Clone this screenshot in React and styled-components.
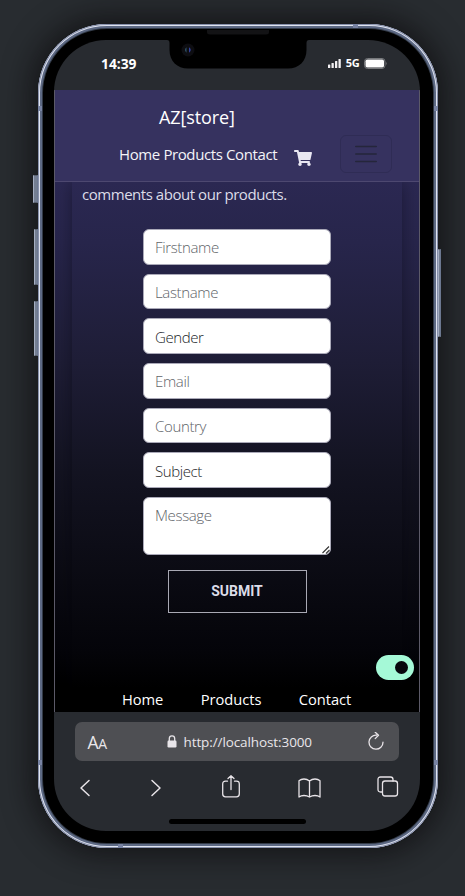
import React from 'react';
import styled, { createGlobalStyle } from 'styled-components';

const Global = createGlobalStyle`
  * { box-sizing: border-box; }
  body {
    margin: 0;
    background: #282c30;
    font-family: "Open Sans", "Noto Sans", sans-serif;
    overflow: hidden;
  }
  input, button, textarea { font-family: inherit; margin: 0; }
`;

const Stage = styled.main`
  width: 465px;
  height: 896px;
  padding: 24px 27px 48px 38px;
  overflow: hidden;
`;

const Phone = styled.div`
  position: relative;
  width: 400px;
  height: 824px;
  padding: 16px 18px 17px 16px;
  border-radius: 69px;
  background: #000;
  box-shadow:
    inset 0 0 0 1px #8790ab,
    inset 0 0 0 2px #e0e4f0,
    inset 0 0 0 4px #5d6984,
    inset 0 0 0 5px #323a47,
    0 0 28px 8px rgba(10, 8, 10, 0.6);
`;

const SideButton = styled.i`
  position: absolute;
  left: ${(p) => p.$left}px;
  top: ${(p) => p.$top}px;
  width: ${(p) => p.$width}px;
  height: ${(p) => p.$height}px;
  border: 1px solid #98a2b8;
  border-color: #59606e #6c7890 #59606e #a5aec2;
  background: #747e92;
`;

const Antenna = styled.i`
  position: absolute;
  left: ${(p) => p.$left}px;
  top: ${(p) => p.$top}px;
  width: ${(p) => (p.$flat ? 5 : 4)}px;
  height: ${(p) => (p.$flat ? 4 : 5)}px;
  background: #7883a3;
`;

const Notch = styled.div`
  position: absolute;
  z-index: 2;
  left: 131px;
  top: 15px;
  width: 138px;
  height: 54px;
  pointer-events: none;
  svg { display: block; overflow: visible; }
`;

const Screen = styled.div`
  display: flex;
  flex-direction: column;
  width: 366px;
  height: 791px;
  border-radius: 52px;
  overflow: hidden;
  background: #282b30;
`;

const StatusBar = styled.header`
  flex: none;
  display: flex;
  justify-content: space-between;
  align-items: center;
  height: 50px;
  padding: 0 33px 2px 47px;
  color: #fff;
`;

const Clock = styled.time`
  font-size: 13.8px;
  font-weight: 700;
  line-height: 20px;
`;

const Signals = styled.div`
  display: flex;
  align-items: center;
  gap: 4.500px;
  padding-bottom: 2px;
  font-size: 11px;
  font-weight: 700;
  line-height: 14px;
  letter-spacing: -0.2px;
  svg { display: block; }
`;

const Page = styled.section`
  flex: none;
  display: flex;
  flex-direction: column;
  height: 622px;
  border: solid #5c5a68;
  border-width: 0 1px;
  background: #000;
`;

const SiteHeader = styled.div`
  flex: none;
  display: flex;
  flex-direction: column;
  height: 92px;
  padding-top: 14px;
  background: #36325f;
  border-bottom: 1px solid #4d4870;
`;

const Brand = styled.div`
  align-self: flex-start;
  margin-left: 104px;
  color: #fff;
  font-size: 18px;
  line-height: 26px;
  letter-spacing: -0.1px;
`;

const Nav = styled.nav`
  display: flex;
  align-items: center;
  height: 38px;
  margin-top: 5px;
  padding-left: 64px;
`;

const NavLinks = styled.div`
  display: flex;
  gap: 3.600px;
  width: 159px;
  color: #f4f4f8;
  font-size: 15px;
  line-height: 20px;
  letter-spacing: -0.4px;
`;

const CartIcon = styled.svg`
  display: block;
  margin: 7px 0 0 16px;
`;

const MenuButton = styled.button`
  display: flex;
  align-items: center;
  justify-content: center;
  width: 52px;
  height: 38px;
  margin-left: 28px;
  padding: 0;
  border: 1px solid #2f2c55;
  border-radius: 6px;
  background: transparent;
`;

const Content = styled.div`
  flex: none;
  height: 506px;
  padding: 0 17px;
  background: linear-gradient(#2b2852 0, #27254b 60px, #1e1d36 180px, #131321 290px, #0a0a12 400px, #040409 470px, #000 506px);
`;

const Card = styled.div`
  display: flex;
  flex-direction: column;
  align-items: center;
  height: 100%;
  box-shadow: 0 0 16px rgba(0, 0, 10, 0.38);
  clip-path: inset(0 -17px);
  background: linear-gradient(#2b2852 0, #27254b 60px, #1e1d36 180px, #131321 290px, #0a0a12 400px, #040409 470px, #000 506px);
`;

const Intro = styled.p`
  align-self: flex-start;
  margin: 2px 0 0 10px;
  color: #dcdce8;
  font-size: 15px;
  font-weight: 500;
  line-height: 21px;
  letter-spacing: -0.46px;
  white-space: nowrap;
`;

const Form = styled.form`
  display: flex;
  flex-direction: column;
  align-items: center;
  width: 188px;
  margin-top: 24px;
`;

const fieldText = `
  display: block;
  width: 188px;
  border: 1px solid #aaa9b8;
  border-radius: 6px;
  background: #fff;
  color: #212529;
  font-family: "Open Sans", sans-serif;
  font-size: 15px;
  font-weight: 350;
  letter-spacing: -0.35px;
  outline: none;
  &::placeholder { color: #606368; opacity: 1; }
`;

const Field = styled.input`
  ${fieldText}
  height: 35.7px;
  margin-bottom: 9px;
  padding: 0 11px;
`;

const Select = styled.div`
  ${fieldText}
  height: 35.7px;
  margin-bottom: 9px;
  padding: 1px 11px 0;
  line-height: 35px;
  letter-spacing: -0.4px;
`;

const Message = styled.textarea`
  ${fieldText}
  height: 58px;
  padding: 6px 11px;
  line-height: 22px;
  resize: none;
`;

const MessageBox = styled.div`
  position: relative;
  svg { position: absolute; right: 1px; bottom: 1px; }
`;

const Submit = styled.button`
  width: 139px;
  height: 42.500px;
  margin-top: 15px;
  padding: 0;
  border: 1px solid #a9a9b4;
  background: transparent;
  color: #dcdce8;
  && { font-family: Roboto, sans-serif; }
  font-size: 14px;
  font-weight: 700;
`;

const Toggle = styled.div`
  position: absolute;
  left: 337.500px;
  top: 631px;
  display: flex;
  align-items: center;
  justify-content: flex-end;
  width: 38px;
  height: 25px;
  padding-right: 6px;
  border-radius: 13px;
  background: #a5f9d7;
`;

const Knob = styled.i`
  width: 13px;
  height: 13px;
  border-radius: 50%;
  background: #07060d;
`;

const SiteFooter = styled.footer`
  display: flex;
  gap: 37.5px;
  height: 24px;
  padding-left: 67px;
  color: #fff;
  font-size: 14.7px;
  font-weight: 500;
  line-height: 23px;
  letter-spacing: -0.05px;
`;

const BrowserBar = styled.div`
  display: flex;
  flex-direction: column;
  align-items: center;
  flex: 1;
  padding-top: 10px;
  color: #e9e6ea;
`;

const AddressBar = styled.div`
  display: flex;
  align-items: center;
  width: 324px;
  height: 39px;
  margin-right: 1px;
  padding: 0 15px 0 13px;
  border-radius: 7px;
  background: #4e4f53;
`;

const TextSize = styled.span`
  width: 79.500px;
  font-size: 17.5px;
  line-height: 24px;
  padding-top: 2px;
  letter-spacing: -0.3px;
  small { font-size: 14px; }
`;

const Url = styled.span`
  margin-left: 6.500px;
  font-size: 13.5px;
  line-height: 20px;
  letter-spacing: -0.1px;
  flex: 1;
`;

const Toolbar = styled.div`
  display: grid;
  grid-template-columns: 71px 71px 76px 78.500px 21px;
  align-items: center;
  align-self: flex-start;
  height: 30px;
  margin: 10px 0 0 26px;
  svg { display: block; overflow: visible; }
`;

const Chevron = styled.svg`
  margin-top: 4px;
`;

const HomeIndicator = styled.div`
  width: 137px;
  height: 5px;
  margin-top: 18px;
  border-radius: 3px;
  background: #000;
`;

const stroke = { fill: 'none', stroke: '#e8e4e8', strokeWidth: 1.5, strokeLinecap: 'round', strokeLinejoin: 'round' };

export default function App() {
  return (
    <>
      <Global />
      <Stage>
        <Phone>
          <SideButton $left={-5} $top={151} $width={5} $height={28} />
          <SideButton $left={-4} $top={205} $width={4} $height={56} />
          <SideButton $left={-4} $top={277} $width={4} $height={55} />
          <SideButton $left={400} $top={225} $width={3} $height={88} />
          <Antenna $left={0} $top={82} />
          <Antenna $left={396} $top={82} />
          <Antenna $left={0} $top={736} />
          <Antenna $left={396} $top={736} />
          <Antenna $flat $left={315} $top={0} />
          <Antenna $flat $left={80} $top={820} />
          <Notch>
            <svg width="138" height="54" viewBox="0 0 138 54">
              <path d="M-2 0H140V1Q137.500 1 137.500 4V11C137.500 22 130 29.500 119 29.500H19C8 29.500 0.500 22 0.500 11V4Q0.500 1 -2 1Z" fill="#000" />
              <path d="M38 -9V-7Q38 -4.500 41 -4.500H97Q100 -4.500 100 -7V-9Z" fill="#131315" />
              <circle cx="19" cy="11" r="6.500" fill="#0d0d11" />
              <path d="M17.500 8.300Q14.500 11 17.500 13.700Z" fill="#2f5468" />
              <path d="M20 8.300Q23.500 11 20 13.700Z" fill="#3340a0" />
            </svg>
          </Notch>
          <Screen>
            <StatusBar>
              <Clock>14:39</Clock>
              <Signals>
                <svg width="13" height="9" fill="#f2f0f2">
                  <rect x="0" y="5.500" width="2.300" height="3.500" rx=".6" />
                  <rect x="3.500" y="4" width="2.300" height="5" rx=".6" />
                  <rect x="7" y="2" width="2.300" height="7" rx=".6" />
                  <rect x="10.500" y="0" width="2.300" height="9" rx=".6" />
                </svg>
                5G
                <svg width="23" height="11">
                  <rect x=".5" y=".5" width="20.500" height="10" rx="3" fill="none" stroke="#77797c" />
                  <rect x="1.500" y="1.500" width="18.500" height="8" rx="1.800" fill="#fff" />
                  <path d="M22 4Q23.300 5.500 22 7Z" fill="#77797c" />
                </svg>
              </Signals>
            </StatusBar>
            <Page>
              <SiteHeader>
                <Brand>AZ[store]</Brand>
                <Nav>
                  <NavLinks>
                    <span>Home</span>
                    <span>Products</span>
                    <span>Contact</span>
                  </NavLinks>
                  <CartIcon width="18" height="16" viewBox="0 0 576 512" fill="#e9e7f2">
                    <path d="M528 301l47-208c4-15-8-29-23-29H159L150 19c-2-11-12-19-23-19H24C11 0 0 11 0 24v16c0 13 11 24 24 24h70l70 343c-17 10-28 28-28 49 0 31 25 56 56 56s56-25 56-56c0-16-6-30-17-40h210c-11 10-17 24-17 40 0 31 25 56 56 56s56-25 56-56c0-22-13-41-32-50l6-25c3-15-8-29-24-29H218l-7-32h294c11 0 21-8 23-19z" />
                  </CartIcon>
                  <MenuButton aria-label="Menu">
                    <svg width="22" height="18" viewBox="0 0 22 18" stroke="#25263b" strokeWidth="1.700" strokeLinecap="round">
                      <path d="M.8 1.500H21.200M.8 9H21.200M.8 16.500H21.200" />
                    </svg>
                  </MenuButton>
                </Nav>
              </SiteHeader>
              <Content>
                <Card>
                  <Intro>comments about our products.</Intro>
                  <Form>
                    <Field placeholder="Firstname" />
                    <Field placeholder="Lastname" />
                    <Select>Gender</Select>
                    <Field placeholder="Email" />
                    <Field placeholder="Country" />
                    <Select>Subject</Select>
                    <MessageBox>
                      <Message placeholder="Message" />
                      <svg width="8" height="8" stroke="#333" strokeWidth="1.100">
                        <path d="M0.500 7L7 0.500M4 7.500L7.500 4" />
                      </svg>
                    </MessageBox>
                    <Submit type="button">SUBMIT</Submit>
                  </Form>
                </Card>
              </Content>
              <SiteFooter>
                <span>Home</span>
                <span>Products</span>
                <span>Contact</span>
              </SiteFooter>
            </Page>
            <BrowserBar>
              <AddressBar>
                <TextSize>A<small>A</small></TextSize>
                <svg width="10" height="13" viewBox="0 0 10 13">
                  <path d="M2.300 6V3.600a2.700 2.700 0 0 1 5.400 0V6" fill="none" stroke="#e9e6ea" strokeWidth="1.300" />
                  <rect x=".5" y="5.500" width="9" height="7" rx="1.200" fill="#e9e6ea" />
                </svg>
                <Url>http://localhost:3000</Url>
                <svg width="16" height="20" viewBox="0 0 16 20" {...stroke} strokeWidth="1.300">
                  <path d="M8.500 3.200A7 7 0 1 0 15 10.200M7.200 0.200L10.500 3.300L7.200 6.600" />
                </svg>
              </AddressBar>
              <Toolbar>
                <Chevron width="10" height="16" {...stroke}><path d="M9 0.500L1 8L9 15.500" /></Chevron>
                <Chevron width="10" height="16" {...stroke}><path d="M1 0.500L9 8L1 15.500" /></Chevron>
                <svg width="18" height="23" {...stroke} strokeWidth="1.300">
                  <path d="M5.500 6.200H3.500Q.7 6.200 .7 9V19Q.7 21.800 3.500 21.800H14.500Q17.300 21.800 17.300 19V9Q17.300 6.200 14.500 6.200H12.500M9 14.500V.7M6 3.500L9 .7L12 3.500" />
                </svg>
                <svg width="23" height="17" {...stroke} strokeWidth="1.300">
                  <path d="M11.500 3Q9 1 6 1T1 2.800V19Q3 17.500 6 17.500T11.500 19Q14 17.500 17 17.500T22 19V2.800Q20 1 17 1T11.500 3V19" />
                </svg>
                <svg width="21" height="21" {...stroke} strokeWidth="1.300">
                  <path d="M5.500 16H3.500Q1 16 1 13.500V3.500Q1 1 3.500 1H13.500Q16 1 16 3.500V5" />
                  <rect x="5.500" y="5" width="15" height="15" rx="2.500" />
                </svg>
              </Toolbar>
              <HomeIndicator />
            </BrowserBar>
          </Screen>
          <Toggle><Knob /></Toggle>
        </Phone>
      </Stage>
    </>
  );
}
